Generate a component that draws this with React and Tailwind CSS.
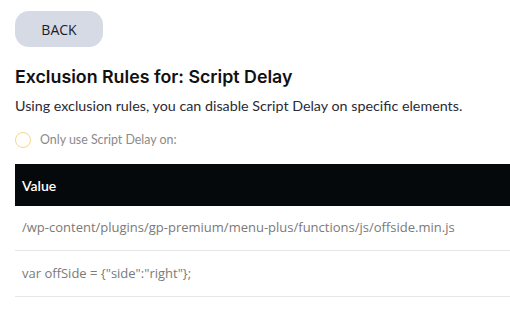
export default function App() {
  return (
    <div className="w-[510px] h-[313px] overflow-hidden bg-white pl-[15px]">
      <div className="pt-[11px]">
        <button className="w-[88px] h-[36px] rounded-[14px] bg-[#d5dae5] text-[14px] text-[#1c1c2b] [font-family:'Open_Sans',sans-serif]">
          BACK
        </button>
      </div>
      <h2 className="mt-[19px] text-[17.8px] leading-[22px] font-semibold text-[#111] [font-family:Inter,sans-serif]">
        Exclusion Rules for: Script Delay
      </h2>
      <p className="mt-[8px] text-[14.3px] leading-[20px] text-[#2a2a35] [font-family:Lato,sans-serif]">
        Using exclusion rules, you can disable Script Delay on specific elements.
      </p>
      <div className="mt-[15px] flex items-center gap-[9px] h-[18px]">
        <span className="w-[16px] h-[16px] rounded-full border-[1.5px] border-[#f6d78a] box-border" />
        <span className="text-[12.4px] text-[#8a8a8a] [font-family:Lato,sans-serif]">Only use Script Delay on:</span>
      </div>
      <div className="mt-[15px]">
        <div className="h-[42px] bg-[#05090c] flex items-center px-[7px] text-[14px] font-semibold text-white [font-family:Lato,sans-serif]">
          Value
        </div>
        <div className="h-[45px] flex items-center px-[7px] border-b border-[#e6e6e6] text-[13px] text-[#7a7a7a] [font-family:'Open_Sans',sans-serif]">
          /wp-content/plugins/gp-premium/menu-plus/functions/js/offside.min.js
        </div>
        <div className="h-[46px] flex items-center px-[7px] border-b border-[#e6e6e6] text-[13px] text-[#7a7a7a] [font-family:'Open_Sans',sans-serif]">
          var offSide = {'{"side":"right"};'}
        </div>
      </div>
    </div>
  );
}
